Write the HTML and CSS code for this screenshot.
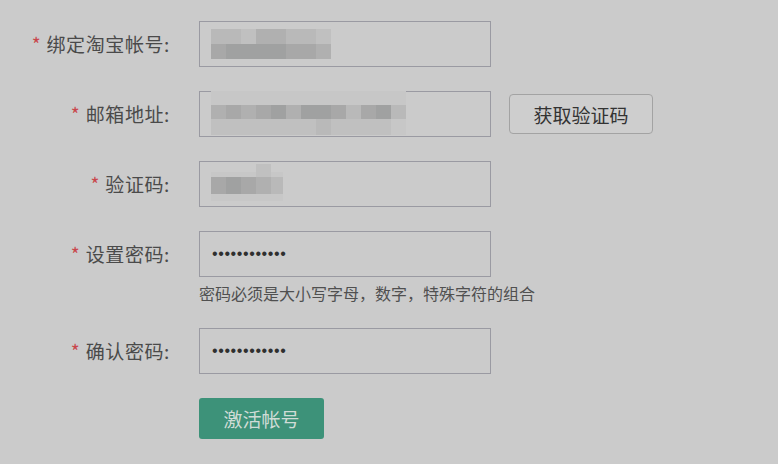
FILE: index.html
```html
<!DOCTYPE html>
<html lang="zh-CN">
<head>
  <meta charset="UTF-8" />
  <meta name="viewport" content="width=device-width, initial-scale=1.0" />
  <title>激活帐号</title>
  <link rel="stylesheet" href="styles.css">
</head>
<body>
  <form class="bind-form">
    <div class="row">
      <label class="label"><span class="req">*</span>绑定淘宝帐号:</label>
      <div class="field">
        <input type="text" class="input">
        <div class="mosaic m1">
          <span class="c2"></span><span class="c2"></span><span class="c1"></span><span class="c3"></span><span class="c3"></span><span class="c2"></span><span class="c2"></span><span class="c1"></span>
          <span class="c4"></span><span class="c5"></span><span class="c5"></span><span class="c5"></span><span class="c5"></span><span class="c4"></span><span class="c4"></span><span class="c3"></span>
        </div>
      </div>
    </div>

    <div class="row">
      <label class="label"><span class="req">*</span>邮箱地址:</label>
      <div class="field">
        <input type="text" class="input">
        <div class="mosaic m2">
          <span class="c0"></span><span class="c0"></span><span class="c0"></span><span class="c0"></span><span class="c0"></span><span class="c0"></span><span class="c0"></span><span class="c0"></span><span class="c0"></span><span class="c0"></span><span class="c0"></span><span class="c0"></span><span class="c0"></span>
          <span class="c3"></span><span class="c4"></span><span class="c3"></span><span class="c4"></span><span class="c5"></span><span class="c3"></span><span class="c5"></span><span class="c5"></span><span class="c4"></span><span class="c2"></span><span class="c4"></span><span class="c5"></span><span class="c2"></span>
          <span class="c1"></span><span class="c1"></span><span class="c1"></span><span class="c1"></span><span class="c1"></span><span class="c1"></span><span class="c1"></span><span class="c2"></span><span class="c1"></span><span class="c1"></span><span class="c1"></span><span class="c1"></span><span class="c0"></span>
        </div>
      </div>
      <button type="button" class="btn-code">获取验证码</button>
    </div>

    <div class="row">
      <label class="label"><span class="req">*</span>验证码:</label>
      <div class="field">
        <input type="text" class="input">
        <div class="mosaic m3">
          <span></span><span></span><span></span><span class="c1"></span><span></span>
          <span class="c0"></span><span class="c0"></span><span class="c0"></span><span class="c1"></span><span class="c0"></span>
          <span class="c4"></span><span class="c5"></span><span class="c4"></span><span class="c3"></span><span class="c2"></span>
          <span class="c0"></span><span class="c0"></span><span class="c0"></span><span class="c0"></span><span class="c0"></span>
        </div>
      </div>
    </div>

    <div class="row">
      <label class="label"><span class="req">*</span>设置密码:</label>
      <div class="field">
        <input type="password" class="input" value="abcdefghijkl">
        <p class="hint">密码必须是大小写字母，数字，特殊字符的组合</p>
      </div>
    </div>

    <div class="row">
      <label class="label"><span class="req">*</span>确认密码:</label>
      <div class="field">
        <input type="password" class="input" value="abcdefghijkl">
      </div>
    </div>

    <div class="row actions">
      <button type="submit" class="btn-submit">激活帐号</button>
    </div>
  </form>
</body>
</html>
```

FILE: styles.css
```css
:root {
  --bg: #cbcbcb;
  --text: #4a4a4a;
  --border: #9a9aa2;
  --required: #c9474c;
  --green: #3d9279;
}

body {
  margin: 0;
  background: var(--bg);
  font-family: "Noto Sans CJK SC", "Noto Sans", sans-serif;
  color: var(--text);
}

.bind-form {
  padding-top: 21px;
}

.row {
  display: flex;
  align-items: flex-start;
  margin-bottom: 24px;
}

.label {
  width: 170px;
  height: 46px;
  line-height: 46px;
  margin-right: 29px;
  text-align: right;
  font-size: 19px;
  letter-spacing: 0.6px;
  white-space: nowrap;
}

.req {
  color: var(--required);
  font-size: 19px;
  letter-spacing: 0;
  margin-right: 6px;
}

.field {
  position: relative;
  width: 292px;
}

.input {
  display: block;
  box-sizing: border-box;
  width: 292px;
  height: 46px;
  margin: 0;
  padding: 0 12px;
  border: 1px solid var(--border);
  background: var(--bg);
  color: #2f2f2f;
  font-family: "Liberation Sans", sans-serif;
  font-size: 16px;
  letter-spacing: 0.6px;
  outline: none;
}

.hint {
  margin: 5px 0 0;
  font-size: 16px;
  line-height: 22px;
  white-space: nowrap;
  color: #505050;
}

/* pixelated, blurred-out values */
.mosaic {
  position: absolute;
  display: grid;
}

.m1 {
  left: 12px;
  top: 8px;
  grid-template-columns: repeat(8, 15px);
  grid-template-rows: 15px 15px;
}

.m2 {
  left: 12px;
  top: 0;
  grid-template-columns: repeat(13, 15px);
  grid-template-rows: 14px 14px 16px;
}

.m3 {
  left: 12px;
  top: 3px;
  grid-template-columns: 15px 15px 15px 15px 12px;
  grid-template-rows: 8px 5px 17px 7px;
}

.c0 { background: #c7c7c7; }
.c1 { background: #c0c0c0; }
.c2 { background: #b9b9b9; }
.c3 { background: #b0b0b0; }
.c4 { background: #a8a8a8; }
.c5 { background: #a0a1a1; }

.btn-code {
  margin: 3px 0 0 18px;
  width: 144px;
  height: 40px;
  border: 1px solid #a3a3a3;
  border-radius: 4px;
  background: #cecece;
  color: #333;
  font-family: inherit;
  font-size: 19px;
  padding: 0;
}

.actions {
  padding-left: 199px;
}

.btn-submit {
  width: 125px;
  height: 41px;
  border: none;
  border-radius: 3px;
  background: var(--green);
  color: #cfdcd6;
  font-family: inherit;
  font-size: 19px;
  padding: 0;
}
```
